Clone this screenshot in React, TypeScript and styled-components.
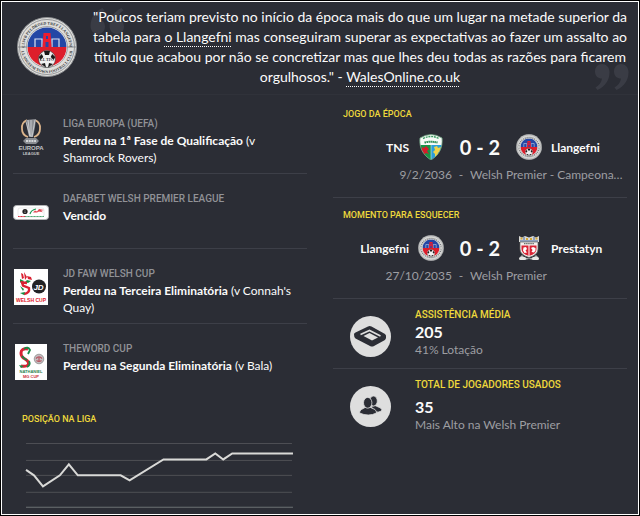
import React, { ReactNode } from "react";
import styled, { createGlobalStyle } from "styled-components";

const color = {
  panel: "#2b2d35",
  line: "#3d3f48",
  label: "#919297",
  muted: "#9d9ea2",
  accent: "#efd93c",
  text: "#fbfbfb",
};

const GlobalStyle = createGlobalStyle`
  *, *::before, *::after { box-sizing: border-box; }
  body {
    margin: 0;
    background: #000;
    color: ${color.text};
    font: 12px/17px Lato, "Open Sans", sans-serif;
  }
  h2, p, blockquote, figure { margin: 0; }
  svg { display: block; }
`;

const Frame = styled.div`
  min-height: 100vh;
  padding: 1px;
  display: flex;
`;

const Panel = styled.main`
  flex: 1;
  min-width: 0;
  border: 1px solid #fff;
  background: ${color.panel};
`;

const Header = styled.header`
  position: relative;
  display: flex;
  align-items: center;
  gap: 14px;
  padding: 5px 9px 7px 15px;
  border-bottom: 1px solid #30323a;
`;

const CrestSlot = styled.div`
  flex: none;
`;

const Quote = styled.blockquote`
  position: relative;
  flex: 1;
  text-align: center;
  font-size: 14px;
  line-height: 20px;
`;

const QuoteLink = styled.a`
  color: inherit;
  text-decoration: underline dotted 1px;
  text-underline-offset: 4px;
  text-decoration-skip-ink: none;
`;

const QuoteMark = styled.svg<{ $closing?: boolean }>`
  position: absolute;
  ${(p) => (p.$closing ? "right: 9px; bottom: 4px;" : "left: 88px; top: 6px; transform: rotate(180deg);")}
  fill: #3a3c45;
`;

const Columns = styled.div`
  display: grid;
  grid-template-columns: minmax(0, 1fr) minmax(0, 1fr);
  gap: 26px;
  padding: 2px 11px 0;
`;

const Competitions = styled.div`
  padding-top: 2px;
`;

const Competition = styled.section`
  display: flex;
  gap: 14px;
  min-height: 75px;
  padding: 17px 0 6px;
  border-bottom: 1px solid ${color.line};
  &:last-of-type { border-color: transparent; }
`;

const LogoSlot = styled.div`
  flex: none;
  width: 36px;
  height: 36px;
  margin-top: 3px;
  display: flex;
  align-items: center;
  justify-content: center;
`;

const Label = styled.h2`
  color: ${color.label};
  font-family: Roboto, sans-serif;
  font-size: 10px;
  line-height: 16px;
  font-weight: 500;
  text-transform: uppercase;
`;

const Result = styled.p`
  line-height: 17px;
`;

const Heading = styled.h2<{ $small?: boolean }>`
  color: ${color.accent};
  font-family: Roboto, sans-serif;
  font-size: ${(p) => (p.$small ? 9 : 10)}px;
  line-height: 16px;
  font-weight: 500;
  text-transform: uppercase;
`;

const ChartSection = styled.figure`
  padding: 12px 13px 0 9px;
`;

const Chart = styled.svg`
  width: 100%;
  padding: 0 0 0 3px;
  margin-top: 14px;
`;

const Match = styled.section`
  min-height: 101px;
  border-bottom: 1px solid ${color.line};
  padding: 9px 0 0 10px;
`;

const Score = styled.div`
  display: grid;
  grid-template-columns: minmax(0, 1fr) 26px 72px 26px minmax(0, 1fr);
  align-items: center;
  margin: 12px 0 6px -10px;
`;

const Team = styled.span<{ $home?: boolean }>`
  padding: 0 9px;
  font-weight: 700;
  text-align: ${(p) => (p.$home ? "right" : "left")};
`;

const Goals = styled.strong`
  font-size: 20px;
  line-height: 26px;
  text-align: center;
`;

const MatchInfo = styled.p`
  display: grid;
  grid-template-columns: 7fr 18px minmax(0, 9fr);
  margin: 0 4px 0 -10px;
  color: ${color.muted};
  text-align: center;
`;

const MatchDate = styled.span`
  text-align: right;
`;

const MatchCompetition = styled.span`
  text-align: left;
  overflow: hidden;
  white-space: nowrap;
  text-overflow: ellipsis;
`;

const Stat = styled.section`
  display: flex;
  gap: 24px;
  min-height: 70px;
  padding: 8px 0 0 17px;
  border-bottom: 1px solid ${color.line};
  &:last-of-type { border-color: transparent; }
`;

const StatIcon = styled.svg`
  flex: none;
  margin-top: 9px;
`;

const StatValue = styled.p<{ $spaced?: boolean }>`
  margin-top: ${(p) => (p.$spaced ? 5 : 0)}px;
  font-size: 16px;
  line-height: 18px;
  font-weight: 700;
`;

const StatNote = styled.p`
  color: ${color.muted};
`;

function LlangefniCrest({ size, id, lettered }: { size: number; id: string; lettered?: boolean }) {
  return (
    <svg width={size} height={size} viewBox="0 0 60 60" role="img" aria-label="Llangefni">
      <defs>
        <path id={`${id}-top`} d="M7.500 30a22.500 22.500 0 0 1 45 0" />
        <path id={`${id}-low`} d="M4 30a26 26 0 0 0 52 0" />
        <clipPath id={`${id}-clip`}><circle cx="30" cy="30" r="19.500" /></clipPath>
      </defs>
      <circle cx="30" cy="30" r="29.500" fill="#dededc" stroke="#8c8e91" />
      <circle cx="30" cy="30" r="27.500" fill="none" stroke="#77797c" strokeWidth=".7" />
      <circle cx="30" cy="30" r="20.400" fill="#fff" stroke="#85878a" strokeWidth=".8" />
      <g clipPath={`url(#${id}-clip)`}>
        <path d="M10 10h40v20H10z" fill="#2447a5" />
        <path d="M10 30h40v21H10z" fill="#dd1e2b" />
        <path d="M18 30v-8h7v8M35 30v-8h7v8" fill="none" stroke="#dce2f1" strokeWidth="1.200" />
        <path d="M25.500 30l1-14h7l1 14z" fill="#ed1c2e" />
        <path d="M29 19h2v3h-2zM28.500 25h3v5h-3z" fill="#2447a5" />
      </g>
      <path d="M1 30h8.500M50.500 30H59" stroke="#85878a" strokeWidth="1" />
      <circle cx="30" cy="42" r="8.500" fill="#f1f1f1" stroke="#333" strokeWidth=".6" />
      <path d="M27 34h6l-1 4h-4zM21.800 40l3-3 1.500 3-3 3zM38.200 40l-3-3-1.500 3 3 3zM24 47l4-1 1 4.400zM36 47l-4-1-1 4.400z" fill="#181818" />
      {lettered ? (
        <g fontSize="4" fontWeight="700" fill="#36383b" fontFamily="Liberation Serif, serif" textAnchor="middle">
          <text x="30" y="43.500">LL TFC</text>
          <text><textPath href={`#${id}-top`} startOffset="50%">CLWB PELDROED TREF LLANGEFNI</textPath></text>
          <text><textPath href={`#${id}-low`} startOffset="50%">LLANGEFNI TOWN FOOTBALL CLUB</textPath></text>
        </g>
      ) : (
        <path d="M6.500 27a24 24 0 0 1 47 0M6.500 33a24 24 0 0 0 47 0" fill="none" stroke="#77797c" strokeWidth="3" strokeDasharray="2.500 2" />
      )}
    </svg>
  );
}

function TnsCrest() {
  return (
    <svg width="26" height="26" viewBox="0 0 26 26" role="img" aria-label="TNS">
      <clipPath id="tns"><path d="M2 4Q13-3 24 4C25 14 21 21 13 26 5 21 1 14 2 4z" /></clipPath>
      <g clipPath="url(#tns)">
        <path d="M0 0h26v12H0z" fill="#f7faf7" />
        <path d="M0 11h13v15H0z" fill="#159447" />
        <path d="M13 11h13v15H13z" fill="#2c9fd8" />
        <path d="M4 13l2 1 2-2 3 3-2 2 2 3-3-1-2 2-1-3-2-1z" fill="#d51c2a" />
        <path d="M16 13l3-1 1 2 3-1-1 4-2 2 1 2-4 2v-3l-2-2 2-2z" fill="#f0d348" />
        <path d="M13 11v14" stroke="#dfe9df" strokeWidth=".6" />
      </g>
      <path d="M2 4Q13-3 24 4C25 14 21 21 13 26 5 21 1 14 2 4z" fill="none" stroke="#74aa86" strokeWidth=".8" />
      <path d="M5 4.500q8-4 16 0" fill="none" stroke="#3c9c63" strokeWidth="1.400" strokeDasharray="2 .8" />
      <path d="M6.500 8.500q6.500-1.500 13 0" fill="none" stroke="#178345" strokeWidth="2" strokeDasharray="1.400 .6" />
    </svg>
  );
}

function PrestatynCrest() {
  return (
    <svg width="26" height="26" viewBox="0 0 26 26" role="img" aria-label="Prestatyn">
      <path d="M3 1l3 1.500L9 1l4 1.500L17 1l3 1.500L23 1v6H3z" fill="#d9dad6" />
      <path d="M4.500 3.500h2M10 4h2M14 4h2M19.500 3.500h2" stroke="#d5a637" strokeWidth="2" />
      <path d="M4 6h18M8 2v3M18 2v3" stroke="#4568a8" strokeWidth="1" />
      <path d="M4 7h18v7q0 6-9 8.500Q4 20 4 14z" fill="#f3efed" stroke="#62615f" strokeWidth=".7" />
      <path d="M5.500 10.500h15V14q0 5-7.500 7-7.500-2-7.500-7z" fill="#d92334" />
      <path d="M13 10v11" stroke="#fff" />
      <path d="M7.500 12.500l2.500-.5 1 2-1.500 1.500 1.500 2-2.500.5-1.500-2.500zM15 13l2-1 2.500 1v2.500l-1.500 2-2.500-.5 1-2z" fill="#fff" />
      <path d="M8 8.700h10" stroke="#6b706c" strokeWidth="1.200" strokeDasharray="1.500 .6" />
      <path d="M6 20q2 3 7 3.500 5-.5 7-3.500l2 2-4 3-5-1-5 1-4-3z" fill="#b9bcbb" />
      <path d="M4.500 23.500h4M17.500 23.500h4" stroke="#e6e7e5" strokeWidth="3" strokeLinecap="round" />
    </svg>
  );
}

function EuropaLogo() {
  return (
    <svg width="28" height="38" viewBox="0 0 28 38" role="img" aria-label="Europa League">
      <path d="M10 2q-6 3-5 9 0 6 6 8M18 2q6 3 5 9 0 6-6 8" fill="none" stroke="#dcb58c" strokeWidth="1.800" />
      <path d="M9 2l10-1-1 8-2 10h-4L10 10z" fill="#8c8e93" />
      <path d="M11 2l2 16M14 2v17M18 2l-3 17M9 4l4 14" stroke="#d3d5d8" strokeWidth=".8" />
      <path d="M9 20h10l3 3-3 3H9l-3-3z" fill="#898c91" />
      <path d="M9 23h10" stroke="#d3d5d8" strokeWidth="2" strokeDasharray="2 .7" />
      <g fontFamily="Liberation Sans, sans-serif" fontWeight="700" textAnchor="middle" fill="#c3c5c8">
        <text x="14" y="31.500" fontSize="6">EUROPA</text>
        <text x="14" y="36.500" fontSize="4">LEAGUE</text>
      </g>
    </svg>
  );
}

function WelshPremierLogo() {
  return (
    <svg width="36" height="15" viewBox="0 0 36 15" role="img" aria-label="Welsh Premier League">
      <rect x=".5" y=".5" width="35" height="14" rx="3" fill="#fff" stroke="#b3b4b6" />
      <rect x="5" y="3" width="26" height="9" rx="2" fill="none" stroke="#d7d7d7" strokeWidth=".5" />
      <circle cx="12" cy="6.500" r="2.600" fill="#222" />
      <path d="M11 6h2M11 7.500h2" stroke="#aaa" strokeWidth=".5" />
      <path d="M17 9q1-4 6-5" fill="none" stroke="#1c9a58" strokeWidth="1.200" />
      <path d="M20 7.500l2-2 2 1 2-2.500 5 1-3 .8 2 1.500-4-.8-2 1z" fill="#df4753" />
      <path d="M5 11.500h7" stroke="#d83644" strokeWidth="1.200" strokeDasharray="1.200 .3" />
      <path d="M12 11.500h19" stroke="#53a978" strokeWidth="1.200" strokeDasharray="1.200 .3" />
    </svg>
  );
}

function WelshCupLogo() {
  return (
    <svg width="34" height="36" viewBox="0 0 34 36" role="img" aria-label="Welsh Cup">
      <path d="M0 0h34v36H0z" fill="#fff" />
      <path d="M7 4l2 1 1 4-2 1zM10 3l3 5-2 3zM13 7l4 1 1 3-4-1z" fill="#da2031" />
      <path d="M6 10l4 2-2 3-2-2zM13 11l4 1-3 2-3-1z" fill="#159044" />
      <path d="M13 14l-5-.5 1 3 6 2.500q1 5-5 6" fill="none" stroke="#da2031" strokeWidth="2.400" />
      <path d="M6 17l4 3-1 2zM6 24l5-1-1 3z" fill="#159044" />
      <circle cx="25" cy="17.500" r="7" fill="#222326" />
      <text x="24.500" y="20.500" fontSize="8" textAnchor="middle" fontStyle="italic" fontWeight="700" fontFamily="Liberation Sans, sans-serif" fill="#fff">JD</text>
      <text x="17" y="33" fontSize="5" textAnchor="middle" fontWeight="700" fontFamily="Liberation Sans, sans-serif" fill="#df1727">WELSH CUP</text>
    </svg>
  );
}

function NathanielCupLogo() {
  return (
    <svg width="32" height="36" viewBox="0 0 32 36" role="img" aria-label="Nathaniel MG Cup">
      <path d="M0 0h32v36H0z" fill="#fff" />
      <path d="M13 5Q6 4 6 9q0 4 4 6 5 3 3 6-2 2-7 1" fill="none" stroke="#d92334" strokeWidth="3" />
      <path d="M9 5q4-3 6 1l-2 4M7 12q2 3 5 4M14 17q2 4-2 6" fill="none" stroke="#178b48" strokeWidth="1.800" />
      <path d="M4 21l5 1-3 2z" fill="#178b48" />
      <circle cx="24" cy="15" r="4.800" fill="#c4bdc0" stroke="#777" strokeWidth=".6" />
      <path d="M21 14.500q3-3.500 6 0M21.500 16.500q2.500 2 5 0M24 13v4" fill="none" stroke="#b85560" strokeWidth="1.200" />
      <g fontFamily="Liberation Sans, sans-serif" fontWeight="700" textAnchor="middle" fontSize="4">
        <text x="16" y="29" fill="#2d8251">NATHANIEL</text>
        <text x="16" y="34" fill="#cb2c38">MG CUP</text>
      </g>
    </svg>
  );
}

const markPath =
  "M0 7.500C0 3 3 0 7 0s7.500 3 7.500 8c0 8-4 14-12 18L.5 23.500c3.500-2 6-5 6.500-9C3 14.500 0 12 0 7.500zM19 7.500C19 3 22 0 26 0s7.500 3 7.500 8c0 8-4 14-12 18l-2-2.500c3.500-2 6-5 6.500-9-4 0-7-2.500-7-7z";

const competitions: { name: string; logo: ReactNode; outcome: string; opponent?: string }[] = [
  { name: "Liga Europa (UEFA)", logo: <EuropaLogo />, outcome: "Perdeu na 1ª Fase de Qualificação", opponent: "(v Shamrock Rovers)" },
  { name: "Dafabet Welsh Premier League", logo: <WelshPremierLogo />, outcome: "Vencido" },
  { name: "JD FAW Welsh Cup", logo: <WelshCupLogo />, outcome: "Perdeu na Terceira Eliminatória", opponent: "(v Connah's Quay)" },
  { name: "TheWord Cup", logo: <NathanielCupLogo />, outcome: "Perdeu na Segunda Eliminatória", opponent: "(v Bala)" },
];

const matches = [
  { title: "Jogo da Época", home: "TNS", homeCrest: <TnsCrest />, away: "Llangefni", awayCrest: <LlangefniCrest size={26} id="away" />, date: "9/2/2036", competition: "Welsh Premier - Campeonato" },
  { title: "Momento para Esquecer", home: "Llangefni", homeCrest: <LlangefniCrest size={26} id="home" />, away: "Prestatyn", awayCrest: <PrestatynCrest />, date: "27/10/2035", competition: "Welsh Premier" },
];

export default function App() {
  return (
    <>
      <GlobalStyle />
      <Frame>
        <Panel>
          <Header>
            <QuoteMark width="34" height="26" viewBox="0 0 34 26" aria-hidden="true"><path d={markPath} /></QuoteMark>
            <QuoteMark $closing width="34" height="26" viewBox="0 0 34 26" aria-hidden="true"><path d={markPath} /></QuoteMark>
            <CrestSlot><LlangefniCrest size={60} id="club" lettered /></CrestSlot>
            <Quote>
              "Poucos teriam previsto no início da época mais do que um lugar na metade superior da tabela para{" "}
              <QuoteLink href="#llangefni">o Llangefni</QuoteLink> mas conseguiram superar as expectativas ao fazer um assalto ao
              título que acabou por não se concretizar mas que lhes deu todas as razões para ficarem orgulhosos." -{" "}
              <QuoteLink href="#walesonline">WalesOnline.co.uk</QuoteLink>
            </Quote>
          </Header>
          <Columns>
            <Competitions>
              {competitions.map((c) => (
                <Competition key={c.name}>
                  <LogoSlot>{c.logo}</LogoSlot>
                  <div>
                    <Label>{c.name}</Label>
                    <Result><b>{c.outcome}</b> {c.opponent}</Result>
                  </div>
                </Competition>
              ))}
              <ChartSection>
                <Heading as="figcaption" $small>Posição na Liga</Heading>
                <Chart viewBox="0 0 270 68" role="img" aria-label="Posição na Liga">
                  <path d="M1 2.500h267M1 19.500h267M1 34.500h267M1 51.500h267" stroke="#4e4f54" />
                  <path d="M1 66.500h268" stroke="#6d7174" />
                  <path d="M1 29l8 5.500 9 11 17-11 9-11 9 11h43l9 5 34-21h43l9-6 8 6 9-6h61" fill="none" stroke="#d9d9d7" strokeWidth="2" />
                </Chart>
              </ChartSection>
            </Competitions>
            <div>
              {matches.map((m) => (
                <Match key={m.title}>
                  <Heading $small>{m.title}</Heading>
                  <Score>
                    <Team $home>{m.home}</Team>
                    {m.homeCrest}
                    <Goals>0 - 2</Goals>
                    {m.awayCrest}
                    <Team>{m.away}</Team>
                  </Score>
                  <MatchInfo>
                    <MatchDate>{m.date}</MatchDate>
                    <span>-</span>
                    <MatchCompetition>{m.competition}</MatchCompetition>
                  </MatchInfo>
                </Match>
              ))}
              <Stat>
                <StatIcon width="41" height="41" viewBox="0 0 41 41" aria-hidden="true">
                  <circle cx="20.500" cy="20.500" r="20.500" fill="#dedede" />
                  <path d="M18 10.500q1.500-.8 3.500 0L35 18q1.500 1 1 4-.2 1.500-1.500 2.200L24 30q-2 1-4 0L5.500 22.500q-1.500-1-1.500-4 0-1.500 1.500-2z" fill="#2b2d35" />
                  <path d="M10.500 18.500l9-4 11 5.500" fill="none" stroke="#dedede" strokeWidth="1.600" />
                  <path d="M13.500 20l6-3 8.500 4.500-6 3z" fill="#dedede" />
                </StatIcon>
                <div>
                  <Heading>Assistência Média</Heading>
                  <StatValue>205</StatValue>
                  <StatNote>41% Lotação</StatNote>
                </div>
              </Stat>
              <Stat>
                <StatIcon width="41" height="41" viewBox="0 0 41 41" aria-hidden="true">
                  <circle cx="20.500" cy="20.500" r="20.500" fill="#dedede" />
                  <g fill="#2b2d35" stroke="#dedede" strokeWidth=".8">
                    <path d="M21 20.500l4-1 5.500 2.500q2 1.500 1 3-3 1.500-6 1z" />
                    <ellipse cx="23.500" cy="15" rx="3.800" ry="5" />
                    <path d="M15 21.500h5.500l4.500 2q1.500 1.500 1.500 3.500-8 4-17 0 0-2.500 2-3.500z" />
                    <ellipse cx="17.700" cy="16.800" rx="4.200" ry="5.400" />
                  </g>
                </StatIcon>
                <div>
                  <Heading>Total de Jogadores Usados</Heading>
                  <StatValue $spaced>35</StatValue>
                  <StatNote>Mais Alto na Welsh Premier</StatNote>
                </div>
              </Stat>
            </div>
          </Columns>
        </Panel>
      </Frame>
    </>
  );
}
